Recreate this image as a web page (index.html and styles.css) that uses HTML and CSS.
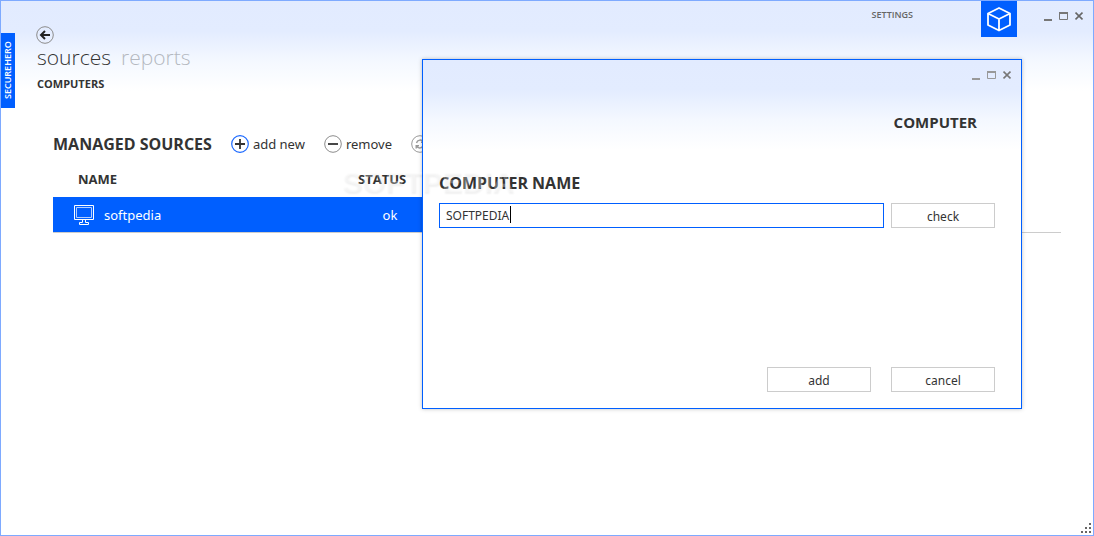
FILE: index.html
```html
<!DOCTYPE html>
<html lang="en">
<head>
    <meta charset="utf-8">
    <title>SecureHero</title>
    <link rel="stylesheet" href="styles.css">
</head>
<body>
    <div class="window">
        <header class="topbar">
            <div class="brand">SECUREHERO</div>
            <div class="heading">
                <button type="button" class="round" aria-label="Back">
                    <svg width="18" height="18" viewBox="0 0 18 18" fill="none">
                        <circle cx="9" cy="9" r="8.3" stroke="#8c8c8c" />
                        <path d="M14 9H5M9 5L5 9l4 4" stroke="#222" stroke-width="2" />
                    </svg>
                </button>
                <nav class="tabs">
                    <a href="#" class="active">sources</a>
                    <a href="#">reports</a>
                </nav>
                <nav><a href="#" class="subtab">COMPUTERS</a></nav>
            </div>
            <a href="#" class="settings">SETTINGS</a>
            <div class="logo">
                <svg width="26" height="26" viewBox="0 0 26 26" fill="none" stroke="#fff" stroke-width="1.8" stroke-linejoin="round">
                    <path d="M13 2L24 7.5V19L13 24.5L2 19V7.5ZM2 7.5L13 13L24 7.5M13 13V24.5" />
                </svg>
            </div>
            <div class="controls">
                <button type="button" aria-label="Minimize"><svg width="8" height="10"><path d="M0 8h8v2H0z" fill="#777" /></svg></button>
                <button type="button" aria-label="Maximize"><svg width="9" height="10"><path d="M.5 2v6.5h8V2" fill="none" stroke="#777" /><path d="M0 1h9v2H0z" fill="#777" /></svg></button>
                <button type="button" aria-label="Close"><svg width="8" height="10"><path d="M.5 1.5l7 7M7.5 1.5l-7 7" stroke="#666" stroke-width="1.7" /></svg></button>
            </div>
        </header>

        <main class="content">
            <div class="toolbar">
                <h2>MANAGED SOURCES</h2>
                <button type="button" class="tool">
                    <svg width="18" height="18" viewBox="0 0 18 18" fill="none">
                        <circle cx="9" cy="9" r="8.3" stroke="#1a68ff" stroke-width="1.2" />
                        <path d="M9 4v10M4 9h10" stroke="#333" stroke-width="1.8" />
                    </svg>
                    add new
                </button>
                <button type="button" class="tool">
                    <svg width="18" height="18" viewBox="0 0 18 18" fill="none">
                        <circle cx="9" cy="9" r="8.3" stroke="#8c8c8c" />
                        <path d="M4 9h10" stroke="#333" stroke-width="1.8" />
                    </svg>
                    remove
                </button>
                <button type="button" class="tool" aria-label="Refresh">
                    <svg width="18" height="18" viewBox="0 0 18 18" fill="none" stroke="#999">
                        <circle cx="9" cy="9" r="8.3" />
                        <path d="M5.5 8a3.8 3.8 0 0 1 7-1M12.8 4.5V7.3H10M12.5 10a3.8 3.8 0 0 1-7 1M5.2 13.5v-2.8H8" stroke-width="1.4" />
                    </svg>
                </button>
            </div>
            <table class="sources">
                <thead>
                    <tr>
                        <th class="name">NAME</th>
                        <th class="status">STATUS</th>
                        <th></th>
                    </tr>
                </thead>
                <tbody>
                    <tr class="selected">
                        <td class="name">
                            <div class="host">
                                <svg width="20" height="20" viewBox="0 0 20 20" fill="none" stroke="#fff">
                                    <path d="M.5.5h19v14H.5z" />
                                    <path d="M2.5 2.5h15v10h-15z" stroke="#b3ceff" />
                                    <path d="M8.5 14.5v3h-3v2h9v-2h-3v-3" />
                                </svg>
                                softpedia
                            </div>
                        </td>
                        <td class="status">ok</td>
                        <td></td>
                    </tr>
                </tbody>
            </table>
        </main>

        <section class="dialog" role="dialog" aria-labelledby="dialogTitle">
            <div class="controls">
                <button type="button" aria-label="Minimize"><svg width="8" height="10"><path d="M0 8h8v2H0z" fill="#999" /></svg></button>
                <button type="button" aria-label="Maximize"><svg width="9" height="10"><path d="M.5 2v6.5h8V2" fill="none" stroke="#999" /><path d="M0 1h9v2H0z" fill="#999" /></svg></button>
                <button type="button" aria-label="Close"><svg width="8" height="10"><path d="M.5 1.5l7 7M7.5 1.5l-7 7" stroke="#777" stroke-width="1.7" /></svg></button>
            </div>
            <h2 id="dialogTitle" class="dialog-title">COMPUTER</h2>
            <form class="form">
                <label for="computerName">COMPUTER NAME</label>
                <div class="row">
                    <div class="field">
                        <input id="computerName" type="text" value="SOFTPEDIA">
                        <span class="caret"></span>
                    </div>
                    <button type="button" class="btn">check</button>
                </div>
                <div class="actions">
                    <button type="button" class="btn">add</button>
                    <button type="button" class="btn">cancel</button>
                </div>
            </form>
        </section>

        <div class="watermark">SOFTPEDIA<sup>®</sup></div>

        <svg class="grip" width="10" height="10" fill="#666">
            <path d="M8 0h2v2H8zM4 4h2v2H4zM8 4h2v2H8zM0 8h2v2H0zM4 8h2v2H4zM8 8h2v2H8z" />
        </svg>
    </div>
</body>
</html>
```
FILE: styles.css
```css
* {
    box-sizing: border-box;
}

body {
    margin: 0;
    font-family: "Noto Sans", "Open Sans", sans-serif;
    font-size: 13px;
    line-height: 18px;
    color: #333;
}

a {
    color: inherit;
    text-decoration: none;
}

h2 {
    margin: 0;
    font: bold 16px/20px "Open Sans", sans-serif;
}

button {
    padding: 0;
    border: none;
    background: none;
    font: inherit;
    color: inherit;
    cursor: pointer;
}

svg {
    display: block;
}

.window {
    position: relative;
    min-height: 100vh;
    border: 1px solid #7eaaff;
    background: linear-gradient(#e2ebff, #e3ecff 30px, #f4f8ff 60px, #fff 90px);
}

.topbar {
    display: flex;
    align-items: flex-start;
}

.brand {
    width: 14px;
    height: 75px;
    margin-top: 32px;
    background: #005fff;
    color: #fff;
    font: 600 9px/14px "Open Sans", sans-serif;
    text-align: center;
    writing-mode: vertical-rl;
    transform: rotate(180deg);
}

.heading {
    flex: 1;
    padding: 25px 0 0 21px;
}

.round {
    display: block;
}

.tabs {
    display: flex;
    gap: 10px;
    padding: 0 0 4px 1px;
    font: 300 21px/26px "Open Sans", sans-serif;
    color: #b4b8c0;
}

.tabs .active {
    color: #333;
}

.subtab {
    display: block;
    padding-left: 1px;
    font: bold 11px/20px "Open Sans", sans-serif;
}

.settings {
    margin: 6px 68px 0 0;
    font: 600 9px/16px "Open Sans", sans-serif;
    color: #666;
}

.logo {
    padding: 5px;
    background: #005fff;
}

.controls {
    display: flex;
    gap: 7px;
    margin: 10px 10px 0 27px;
}

.content {
    padding: 26px 32px 0 52px;
}

.toolbar {
    display: flex;
    align-items: center;
    gap: 19px;
    height: 20px;
}

.tool {
    display: flex;
    align-items: center;
    gap: 4px;
}

.sources {
    width: 100%;
    margin-top: 10px;
    border-collapse: collapse;
    table-layout: fixed;
    text-align: left;
}

.sources th {
    height: 33px;
    padding: 0 0 4px;
    font: bold 13px/18px "Open Sans", sans-serif;
}

.sources td {
    height: 35px;
    padding: 1px 0 0;
    border-bottom: 1px solid #ccc;
}

.sources .name {
    width: 305px;
    padding-left: 25px;
}

.sources td.name {
    padding-left: 21px;
}

.sources .status {
    width: 64px;
}

.sources td.status {
    text-align: center;
}

.selected .name,
.selected .status {
    background: #005fff;
    color: #fff;
}

.host {
    display: flex;
    align-items: center;
    gap: 10px;
}

.dialog {
    position: absolute;
    top: 58px;
    right: 71px;
    width: 600px;
    border: 1px solid #005fff;
    background: linear-gradient(#e2ebff, #e3ecff 30px, #f4f8ff 60px, #fff 90px);
    box-shadow: 0 0 4px rgba(0, 0, 0, 0.25);
}

.dialog .controls {
    justify-content: flex-end;
}

.dialog-title {
    margin: 32px 44px 0 0;
    font-size: 15px;
    text-align: right;
}

.form {
    padding: 41px 26px 16px 16px;
}

.form label {
    display: block;
    font: bold 16px/20px "Open Sans", sans-serif;
}

.row {
    display: flex;
    gap: 7px;
    margin-top: 10px;
}

.field {
    position: relative;
    flex: 1;
}

.field input {
    display: block;
    width: 100%;
    height: 25px;
    padding: 0 6px;
    border: 1px solid #005fff;
    background: #fff;
    font: 12px/18px "Noto Sans", sans-serif;
    color: #333;
    outline: none;
}

.caret {
    position: absolute;
    top: 3px;
    left: 71px;
    width: 1px;
    height: 17px;
    background: #000;
}

.btn {
    width: 104px;
    height: 25px;
    padding-top: 2px;
    border: 1px solid #ccc;
    background: #fff;
    font-size: 12px;
}

.actions {
    display: flex;
    justify-content: flex-end;
    gap: 20px;
    margin-top: 139px;
}

.watermark {
    position: absolute;
    top: 163px;
    left: 341px;
    font: bold 30px/36px "Liberation Sans", sans-serif;
    color: rgba(255, 255, 255, 0.3);
    text-shadow: 1px 2px 2px rgba(0, 0, 0, 0.06);
    pointer-events: none;
}

.watermark sup {
    font-size: 9px;
    line-height: 0;
    vertical-align: 14px;
}

.grip {
    position: absolute;
    right: 2px;
    bottom: 2px;
}
```
